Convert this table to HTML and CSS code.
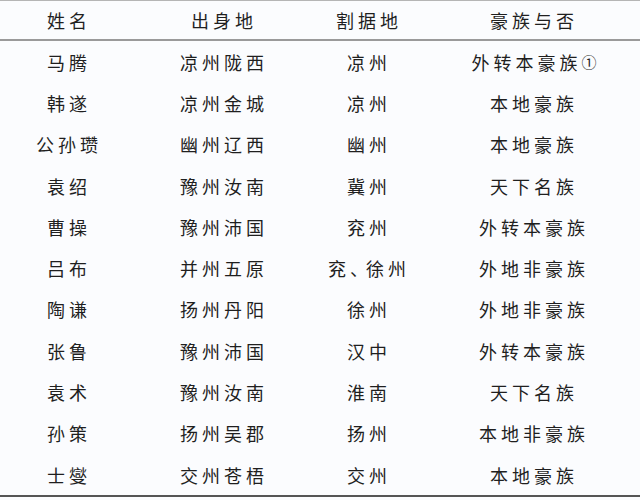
FILE: index.html
```html
<!DOCTYPE html>
<html lang="zh">
<head>
<meta charset="utf-8">
<link rel="stylesheet" href="styles.css">
</head>
<body>
<div class="table">
  <div class="row head">
    <div class="c1">姓名</div><div class="c2">出身地</div><div class="c3">割据地</div><div class="c4">豪族与否</div>
  </div>
  <div class="body">
    <div class="row"><div class="c1">马腾</div><div class="c2">凉州陇西</div><div class="c3">凉州</div><div class="c4">外转本豪族<span class="note">①</span></div></div>
    <div class="row"><div class="c1">韩遂</div><div class="c2">凉州金城</div><div class="c3">凉州</div><div class="c4">本地豪族</div></div>
    <div class="row"><div class="c1">公孙瓒</div><div class="c2">幽州辽西</div><div class="c3">幽州</div><div class="c4">本地豪族</div></div>
    <div class="row"><div class="c1">袁绍</div><div class="c2">豫州汝南</div><div class="c3">冀州</div><div class="c4">天下名族</div></div>
    <div class="row"><div class="c1">曹操</div><div class="c2">豫州沛国</div><div class="c3">兖州</div><div class="c4">外转本豪族</div></div>
    <div class="row"><div class="c1">吕布</div><div class="c2">并州五原</div><div class="c3">兖<span class="pause">、</span>徐州</div><div class="c4">外地非豪族</div></div>
    <div class="row"><div class="c1">陶谦</div><div class="c2">扬州丹阳</div><div class="c3">徐州</div><div class="c4">外地非豪族</div></div>
    <div class="row"><div class="c1">张鲁</div><div class="c2">豫州沛国</div><div class="c3">汉中</div><div class="c4">外转本豪族</div></div>
    <div class="row"><div class="c1">袁术</div><div class="c2">豫州汝南</div><div class="c3">淮南</div><div class="c4">天下名族</div></div>
    <div class="row"><div class="c1">孙策</div><div class="c2">扬州吴郡</div><div class="c3">扬州</div><div class="c4">本地非豪族</div></div>
    <div class="row"><div class="c1">士燮</div><div class="c2">交州苍梧</div><div class="c3">交州</div><div class="c4">本地豪族</div></div>
  </div>
</div>
</body>
</html>
```
FILE: styles.css
```css
html, body {
  margin: 0;
  padding: 0;
  background: #fbfcfe;
}
body {
  width: 640px;
  height: 500px;
  overflow: hidden;
  font-family: "Noto Sans CJK SC", "Noto Sans", sans-serif;
  color: #1f1f1f;
}
.table {
  border-top: 1px solid #b5b5b5;
  border-bottom: 2px solid #555;
  width: 640px;
}
.row {
  display: grid;
  grid-template-columns: 134px 176px 114px 216px;
  height: 41.3px;
  align-items: center;
  font-size: 18px;
  letter-spacing: 4px;
  font-weight: 400;
}
.row > div {
  text-align: center;
  padding-left: 4px;
  white-space: nowrap;
}
.head {
  height: 38px;
  border-bottom: 2px solid #9a9a9a;
}
.pause {
  letter-spacing: -4px;
  margin-right: 2px;
}
.note {
  font-size: 15px;
  letter-spacing: 0;
  position: relative;
  top: -2px;
}
```
